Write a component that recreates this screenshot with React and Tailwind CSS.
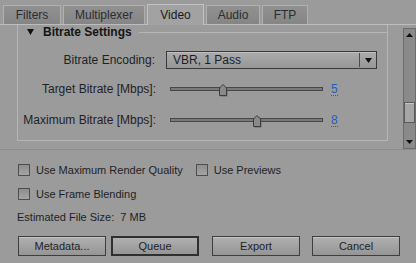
import React from 'react';

const tabs = [
  { label: 'Filters', w: 'w-[58px]' },
  { label: 'Multiplexer', w: 'w-[82px]' },
  { label: 'Video', w: 'w-[57px]', active: true },
  { label: 'Audio', w: 'w-[54px]' },
  { label: 'FTP', w: 'w-[46px]' },
];

const Thumb = ({ left }) => (
  <svg className="absolute top-[-5px]" style={{ left }} width="11" height="14" viewBox="0 0 11 14">
    <polygon points="1.5,5 5,1.5 8.5,5 8.5,12.5 1.5,12.5" fill="#6a6a6a" transform="translate(1,1)" />
    <polygon points="1.5,5 5,1.5 8.5,5 8.5,12.5 1.5,12.5" fill="#8a8a8a" stroke="#3c3c3c" strokeWidth="1" />
  </svg>
);

const SliderRow = ({ label, thumb, value }) => (
  <div className="flex items-center h-[14px] whitespace-nowrap text-[12px]">
    <div className="w-[138px] text-right">{label}</div>
    <div className="relative ml-[14px] w-[153px] h-[4px] border border-[#474747] bg-[#7a7a7a]">
      <Thumb left={thumb} />
    </div>
    <div className="ml-[8px] w-[20px]">
      <span className="text-[#1d5fc4] border-b border-dotted border-[#1d5fc4] leading-[12px] inline-block">{value}</span>
    </div>
  </div>
);

const Check = ({ label }) => (
  <div className="flex items-center h-[14px] gap-[6px] whitespace-nowrap">
    <div className="w-[12px] h-[12px] border border-[#4e4e4e] bg-gradient-to-b from-[#8e8e8e] to-[#a4a4a4]" />
    <span>{label}</span>
  </div>
);

const Button = ({ children, focused, className }) => (
  <div
    className={
      'h-[20px] w-[88px] flex items-center justify-center bg-gradient-to-b from-[#b0b0b0] to-[#959595] ' +
      (focused ? 'border-2 border-[#2f2f2f] ' : 'border border-[#3e3e3e] shadow-[inset_0_1px_0_#c4c4c4] ') +
      className
    }
  >
    {children}
  </div>
);

const App = () => {
  return (
    <div className="w-[416px] h-[263px] overflow-hidden bg-[#9b9b9b] text-[11px] text-[#1e1f26] font-['Liberation_Sans',Arial,sans-serif]">
      <div className="flex items-end gap-[2px] h-[25px] pl-[3px] border-b border-[#bdbdbd]">
        {tabs.map((t) => (
          <div
            key={t.label}
            className={
              t.w +
              ' flex items-center justify-center border border-b-0 ' +
              (t.active
                ? 'h-[21px] -mb-px bg-[#a2a2a2] border-[#c2c2c2] text-[#1a1a1a] text-[12px]'
                : 'h-[19px] bg-gradient-to-b from-[#919191] to-[#858585] border-[#b0b0b0] text-[#2c2c30] text-[12px]')
            }
          >
            {t.label}
          </div>
        ))}
      </div>

      <div className="flex h-[125px] border-b border-[#8c8c8c]">
        <div className="w-[403px] pl-[17px] pt-[7px]">
          <div className="w-[371px] h-[116px] border-l border-r border-b border-[#b6b6b6]">
            <div className="flex items-center h-[14px] -mt-[7px]">
              <svg className="ml-[9px]" width="7" height="6" viewBox="0 0 7 6">
                <polygon points="0,0 7,0 3.5,6" fill="#111" />
              </svg>
              <span className="ml-[9px] font-bold text-[12px] text-[#151515]">Bitrate Settings</span>
              <div className="flex-1 ml-[7px] h-px bg-[#b6b6b6]" />
            </div>

            <div className="flex items-center mt-[12px] whitespace-nowrap text-[12px]">
              <div className="w-[137px] text-right">Bitrate Encoding:</div>
              <div className="ml-[11px] w-[211px] h-[18px] flex items-center border border-[#3a3a3a] bg-gradient-to-b from-[#ababab] to-[#979797] shadow-[inset_0_1px_0_#c0c0c0]">
                <span className="flex-1 pl-[6px]">VBR, 1 Pass</span>
                <div className="w-px h-[14px] bg-[#4a4a4a]" />
                <div className="w-[16px] flex items-center justify-center">
                  <svg width="7" height="5" viewBox="0 0 7 5">
                    <polygon points="0,0 7,0 3.5,5" fill="#111" />
                  </svg>
                </div>
              </div>
            </div>

            <div className="mt-[13px]">
              <SliderRow label="Target Bitrate [Mbps]:" thumb={47} value="5" />
            </div>
            <div className="mt-[17px]">
              <SliderRow label="Maximum Bitrate [Mbps]:" thumb={81} value="8" />
            </div>
          </div>
        </div>

        <div className="mt-[3px] w-[13px] h-[121px] flex flex-col border border-[#6c6c6c] bg-[#8a8a8a]">
          <div className="h-[12px] flex items-center justify-center">
            <svg width="7" height="4" viewBox="0 0 7 4">
              <polygon points="0,4 7,4 3.5,0" fill="#111" />
            </svg>
          </div>
          <div className="flex-1 flex flex-col justify-end pb-[13px]">
            <div className="h-[21px] border border-[#5a5a5a] bg-[#a6a6a6] shadow-[inset_0_1px_0_#c6c6c6]" />
          </div>
          <div className="h-[12px] flex items-center justify-center">
            <svg width="7" height="4" viewBox="0 0 7 4">
              <polygon points="0,0 7,0 3.5,4" fill="#111" />
            </svg>
          </div>
        </div>
      </div>

      <div className="pl-[18px] pt-[13px]">
        <div className="flex gap-[13px]">
          <Check label="Use Maximum Render Quality" />
          <Check label="Use Previews" />
        </div>
        <div className="mt-[10px]">
          <Check label="Use Frame Blending" />
        </div>
        <div className="mt-[9px] -ml-px h-[14px] flex items-center whitespace-pre">Estimated File Size:  7 MB</div>
        <div className="mt-[12px] flex">
          <Button>Metadata...</Button>
          <Button focused className="ml-[5px]">Queue</Button>
          <Button className="ml-[13px]">Export</Button>
          <Button className="ml-[12px]">Cancel</Button>
        </div>
      </div>
    </div>
  );
};

export default App;
